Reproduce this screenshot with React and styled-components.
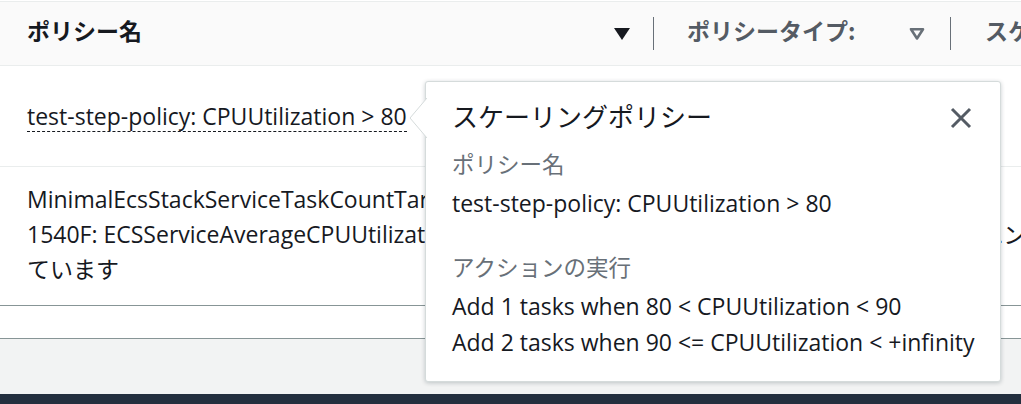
import React from "react";
import styled, { createGlobalStyle } from "styled-components";

const GlobalStyle = createGlobalStyle`
  html, body { margin: 0; padding: 0; background: #ffffff; }
  body {
    font-family: "Open Sans", "Noto Sans CJK JP", sans-serif;
    color: #16191f;
    overflow: hidden;
  }
`;

const Page = styled.div`
  position: relative;
  width: 1021px;
  height: 404px;
  display: flex;
  flex-direction: column;
  overflow: hidden;
  padding-top: 1px;
  box-sizing: border-box;
`;

const HeaderRow = styled.div`
  display: grid;
  grid-template-columns: 653px 297px 1fr;
  align-items: center;
  height: 65px;
  background: #fafafa;
  border-top: 1px solid #eaeded;
  border-bottom: 1px solid #eaeded;
  box-sizing: border-box;
  flex: none;
`;

const HeaderCell = styled.div`
  display: flex;
  align-items: center;
  height: 33px;
  padding-left: ${(p) => p.$pl}px;
  padding-right: ${(p) => p.$pr || 0}px;
  border-left: ${(p) => (p.$divider ? "1px solid #687078" : "none")};
  min-width: 0;
  white-space: nowrap;
`;

const HeaderText = styled.span`
  font-family: "Noto Sans CJK JP", sans-serif;
  font-weight: 700;
  font-size: 23px;
  line-height: 33px;
  color: ${(p) => p.$color};
  flex: 1;
  position: relative;
  top: -3px;
`;

const SortIcon = styled.svg`
  width: 18px;
  height: 14px;
  flex: none;
`;

const Row = styled.div`
  display: flex;
  align-items: ${(p) => (p.$center ? "center" : "flex-start")};
  height: ${(p) => p.$h}px;
  box-sizing: border-box;
  padding: ${(p) => p.$pad || "0 0 0 27px"};
  border-bottom: 1px solid ${(p) => p.$line};
  background: #ffffff;
  flex: none;
`;

const DottedLabel = styled.span`
  font-size: 23px;
  line-height: 30px;
  color: #16191f;
  border-bottom: 1px dashed #16191f;
  margin-top: 1px;
`;

const Lines = styled.div`
  display: flex;
  flex-direction: column;
  font-size: 23px;
  line-height: 35px;
  color: #16191f;
  min-width: 0;
  overflow: hidden;
`;

const Line = styled.span`
  white-space: nowrap;
`;

const Footer = styled.div`
  flex: 1;
  background: #f2f3f3;
`;

const DarkBar = styled.div`
  height: 10px;
  background: #232f3e;
  flex: none;
`;

const Popover = styled.div`
  position: absolute;
  left: 425px;
  top: 81px;
  width: 576px;
  height: 301px;
  box-sizing: border-box;
  background: #ffffff;
  border: 1px solid #d5dbdb;
  border-radius: 3px;
  box-shadow: 0 1px 4px rgba(0, 28, 36, 0.22);
  padding: 17px 26px 0 26px;
  display: flex;
  flex-direction: column;
`;

const Arrow = styled.svg`
  position: absolute;
  left: -17px;
  top: 16px;
  width: 18px;
  height: 40px;
`;

const PopHeader = styled.div`
  display: flex;
  align-items: center;
  justify-content: space-between;
  height: 38px;
`;

const PopTitle = styled.span`
  font-family: "Noto Sans CJK JP", sans-serif;
  font-size: 26px;
  line-height: 38px;
  color: #16191f;
  position: relative;
  top: -2px;
`;

const CloseButton = styled.button`
  border: none;
  background: none;
  padding: 0;
  margin-right: 1px;
  width: 24px;
  height: 24px;
  display: flex;
  align-items: center;
  justify-content: center;
  cursor: pointer;
`;

const Label = styled.div`
  font-family: "Noto Sans CJK JP", sans-serif;
  font-size: 22.5px;
  line-height: 36px;
  color: #687078;
  margin-top: ${(p) => p.$mt}px;
`;

const Value = styled.div`
  font-size: 23px;
  line-height: 36px;
  color: #16191f;
  margin-top: ${(p) => p.$mt || 0}px;
  white-space: nowrap;
`;

export default function App() {
  return (
    <>
      <GlobalStyle />
      <Page>
        <HeaderRow>
          <HeaderCell $pl={27} $pr={22}>
            <HeaderText $color="#16191f">ポリシー名</HeaderText>
            <SortIcon viewBox="0 0 18 14">
              <path d="M1 1 H17 L9 13 Z" fill="#16191f" />
            </SortIcon>
          </HeaderCell>
          <HeaderCell $pl={33} $pr={24} $divider>
            <HeaderText $color="#545b64">ポリシータイプ:</HeaderText>
            <SortIcon viewBox="0 0 18 14">
              <path d="M3 2.2 H15 L9 11.5 Z" fill="none" stroke="#687078" strokeWidth="2.6" strokeLinejoin="round" />
            </SortIcon>
          </HeaderCell>
          <HeaderCell $pl={34} $divider>
            <HeaderText $color="#545b64">スケーリング</HeaderText>
          </HeaderCell>
        </HeaderRow>

        <Row $h={101} $center $line="#eaeded">
          <DottedLabel>test-step-policy: CPUUtilization &gt; 80</DottedLabel>
        </Row>

        <Row $h={139} $pad="15px 0 0 27px" $line="#879596">
          <Lines>
            <Line>MinimalEcsStackServiceTaskCountTargetCpuScalingPolicy</Line>
            <Line>1540F: ECSServiceAverageCPUUtilization を 50に維持するようにタスク数をターゲット追跡エンジンで自動スケーリングし</Line>
            <Line>ています</Line>
          </Lines>
        </Row>

        <Row $h={33} $line="#879596" />

        <Footer />
        <DarkBar />

        <Popover>
          <Arrow viewBox="0 0 18 40">
            <path d="M18 0 L1 20 L18 40" fill="#ffffff" stroke="#d5dbdb" strokeWidth="1" />
          </Arrow>
          <PopHeader>
            <PopTitle>スケーリングポリシー</PopTitle>
            <CloseButton aria-label="閉じる">
              <svg width="22" height="22" viewBox="0 0 22 22">
                <path d="M2 2 L20 20 M20 2 L2 20" stroke="#545b64" strokeWidth="3" />
              </svg>
            </CloseButton>
          </PopHeader>
          <Label $mt={8}>ポリシー名</Label>
          <Value $mt={4}>test-step-policy: CPUUtilization &gt; 80</Value>
          <Label $mt={27}>アクションの実行</Label>
          <Value $mt={4}>Add 1 tasks when 80 &lt; CPUUtilization &lt; 90</Value>
          <Value>Add 2 tasks when 90 &lt;= CPUUtilization &lt; +infinity</Value>
        </Popover>
      </Page>
    </>
  );
}
